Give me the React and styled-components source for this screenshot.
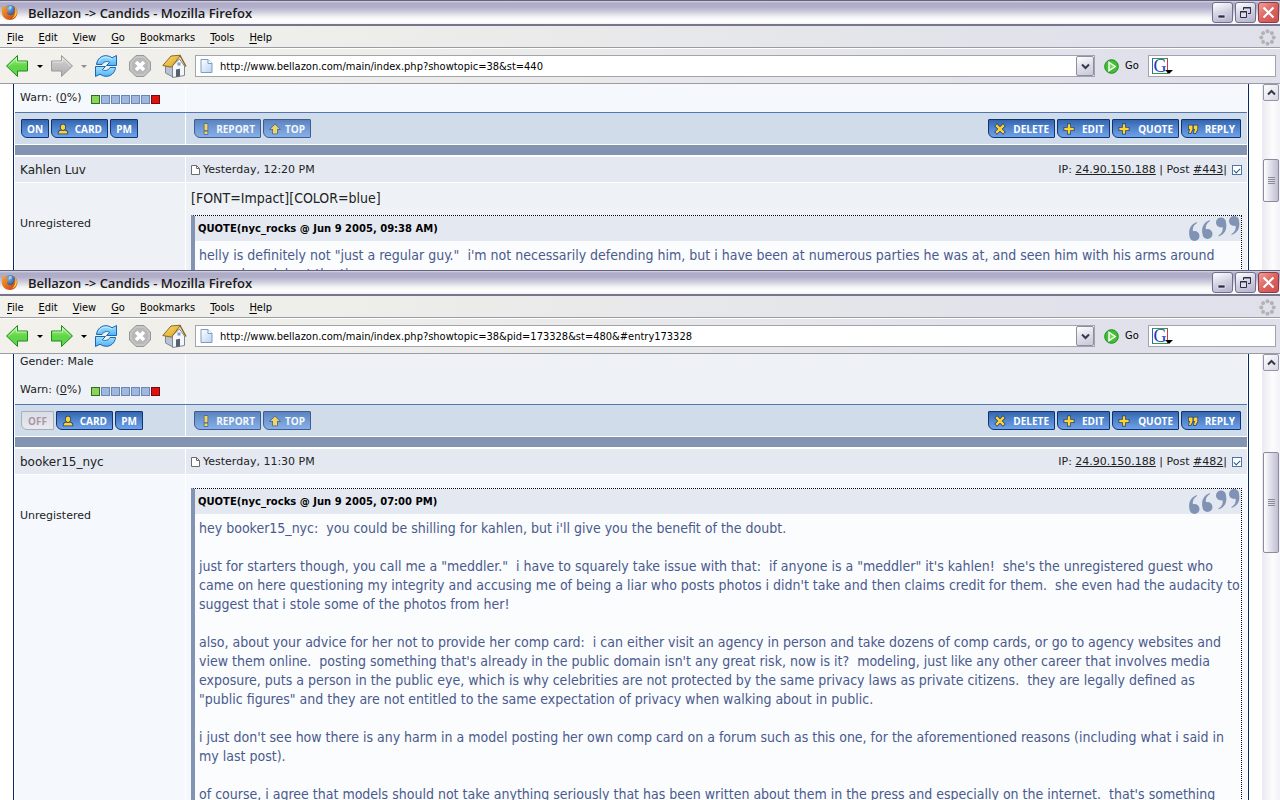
import React from 'react';
import styled, { createGlobalStyle } from 'styled-components';

const GlobalStyle = createGlobalStyle`
  * { box-sizing: border-box; }
  html, body { margin: 0; padding: 0; background: #fff; }
  body { overflow: hidden; }
  button, input { font: inherit; color: inherit; margin: 0; padding: 0; }
  a { color: inherit; }
`;

const verdana = '"DejaVu Sans", Verdana, sans-serif';
const condensed = '"DejaVu Sans Condensed", Tahoma, sans-serif';

const Desktop = styled.div`
  display: flex;
  flex-direction: column;
  height: 100vh;
  overflow: hidden;
  font-family: ${verdana};
  color: #222;
`;

const Defs = styled.svg`
  position: absolute;
  width: 0;
  height: 0;
`;

const Window = styled.section`
  display: flex;
  flex-direction: column;
  flex: ${(p) => (p.$fill ? '1 1 0' : '0 0 270px')};
  min-height: 0;
  overflow: hidden;
`;

/* ---------- window chrome ---------- */

const TitleBar = styled.header`
  display: flex;
  align-items: center;
  flex: none;
  height: 26px;
  padding: 0 1px 0 1px;
  border-top: 1px solid #67617f;
  border-bottom: 2px solid #77758c;
  background: linear-gradient(180deg, #d9d8e4 0, #aeabc6 2px, #b1aecb 6px, #cfcedd 11px, #f3f3f6 16px, #ffffff 20px, #f4f4f8 23px);
`;

const Title = styled.h1`
  flex: 1;
  margin: 0 0 0 10px;
  font: 600 13px/18px "Open Sans", "Trebuchet MS", sans-serif;
  color: #1a1a1a;
  white-space: nowrap;
`;

const WindowButtons = styled.div`
  display: flex;
  gap: 2px;
`;

const WindowButton = styled.button`
  display: grid;
  place-items: center;
  width: 21px;
  height: 21px;
  border: 1px solid ${(p) => (p.$close ? '#8a3b45' : '#6f6e8c')};
  border-radius: 3px;
  background: ${(p) =>
    p.$close
      ? 'linear-gradient(135deg, #f0a09a, #dc6460 50%, #cf504e)'
      : 'linear-gradient(160deg, #ffffff, #d2d1e2 50%, #b3b1cc)'};
`;

const chromeFill = 'linear-gradient(90deg, #f2f1ec, #eeeeea 25%, #e0e1ea 85%, #dfe0e9)';

const MenuBar = styled.nav`
  display: flex;
  align-items: center;
  gap: 15px;
  flex: none;
  height: 23px;
  padding: 1px 4px 0 7px;
  border-bottom: 1px solid #fff;
  box-shadow: inset 0 -1px 0 #9a9ba3;
  background: ${chromeFill};
  font: 11px/14px ${condensed};
  color: #000;
`;

const MenuItem = styled.button`
  border: 0;
  background: none;
  white-space: nowrap;
  u { text-underline-offset: 2px; }
`;

const Spacer = styled.div`
  flex: 1;
`;

const Toolbar = styled.div`
  display: flex;
  align-items: center;
  flex: none;
  height: 35px;
  padding: 0 4px 0 5px;
  border-bottom: 1px solid #9a9ba3;
  background: ${chromeFill};
  font: 11px/14px ${condensed};
  color: #000;
`;

const ToolButton = styled.button`
  display: grid;
  place-items: center;
  width: 24px;
  height: 24px;
  margin-right: ${(p) => p.$gap || 0}px;
  border: 0;
  background: none;
`;

const CaretButton = styled.button`
  display: grid;
  place-items: center;
  width: ${(p) => (p.$narrow ? 20 : 21)}px;
  height: 24px;
  border: 0;
  background: none;
`;

const AddressBox = styled.div`
  display: flex;
  align-items: center;
  flex: 1;
  height: 22px;
  padding-left: 4px;
  border: 1px solid #a2a3ad;
  background: #fff;
`;

const AddressInput = styled.input`
  flex: 1;
  min-width: 0;
  height: 20px;
  margin-left: 7px;
  padding-top: 1px;
  border: 0;
  outline: 0;
  background: none;
`;

const DropButton = styled.button`
  display: grid;
  place-items: center;
  width: 18px;
  height: 20px;
  border: 1px solid #8e8ea2;
  border-radius: 2px;
  background: linear-gradient(160deg, #ffffff, #dfdee9 50%, #c8c7d8);
`;

const GoButton = styled.button`
  display: flex;
  align-items: center;
  gap: 6px;
  width: 44px;
  margin-left: 9px;
  border: 0;
  background: none;
`;

const SearchBox = styled.div`
  display: flex;
  align-items: center;
  width: 128px;
  height: 22px;
  padding-left: 3px;
  border: 1px solid #a2a3ad;
  background: #fff;
`;

/* ---------- forum page ---------- */

const Content = styled.div`
  display: flex;
  flex: 1;
  min-height: 0;
  overflow: hidden;
  background: #fff;
`;

const Forum = styled.main`
  flex: 1;
  min-width: 0;
  margin: 0 13px;
  padding: 0 1px;
  border: solid #072a66;
  border-width: 0 1px;
`;

const Row = styled.div`
  display: grid;
  grid-template-columns: 170px minmax(0, 1fr);
  gap: 1px;
  margin-bottom: 1px;
`;

const PrevRow = styled(Row)`
  height: ${(p) => p.$height}px;
  margin-bottom: 0;
`;

const Cell = styled.div`
  padding: 0 5px;
  background: ${(p) => (p.$alt ? '#eef2f7' : '#f5f9fd')};
  font-size: 11px;
  line-height: 14px;
`;

const ProfileCell = styled(Cell)`
  display: flex;
  flex-direction: column;
  justify-content: flex-end;
  gap: 14px;
  padding-bottom: 7px;
`;

const WarnLine = styled.div`
  display: flex;
  align-items: center;
  gap: 10px;
`;

const WarnMeter = styled.span`
  display: flex;
  gap: 1px;
  margin-top: 2px;
`;

const warnFill = { low: '#8bd35c', mid: '#a0b8dd', high: '#dd1313' };
const warnEdge = { low: '#2f7016', mid: '#6a86b4', high: '#7a0808' };

const WarnStep = styled.i`
  width: 9px;
  height: 9px;
  border: 1px solid ${(p) => warnEdge[p.$tone]};
  background: ${(p) => warnFill[p.$tone]};
`;

const ActionRow = styled(Row)`
  border-top: 1px solid #5176b0;
`;

const ActionCell = styled.div`
  display: flex;
  align-items: center;
  gap: 2px;
  height: 31px;
  padding: 0 6px;
  padding-left: ${(p) => (p.$wide ? 8 : 6)}px;
  background: #d1dceb;
`;

const ForumButton = styled.button`
  display: flex;
  align-items: center;
  justify-content: ${(p) => (p.$bare ? 'center' : 'space-between')};
  width: ${(p) => p.$width}px;
  height: 19px;
  padding: 0 ${(p) => (p.$bare ? 0 : 5)}px;
  border: 1px solid ${(p) => (p.$off ? '#a9adba' : '#0d3573')};
  border-radius: 1px 1px 1px 6px;
  background: ${(p) =>
    p.$off
      ? 'linear-gradient(180deg, #d9dde6, #e8eaf0)'
      : 'linear-gradient(180deg, #3465ad, #4a7dc6 35%, #6ea1e8)'};
  color: ${(p) => (p.$off ? '#ad97a5' : '#fff')};
  opacity: ${(p) => (p.$soft ? 0.75 : 1)};
  font: 700 10px/14px "Open Sans", sans-serif;
`;

const Divider = styled.div`
  height: 10px;
  margin-bottom: 2px;
  background: #8394b2;
`;

const HeadCell = styled.div`
  display: flex;
  align-items: center;
  height: 25px;
  padding: 0 5px;
  background: #e4e9f1;
  font-size: ${(p) => (p.$name ? 12 : 11)}px;
  line-height: 16px;
  white-space: pre;
`;

const DateLine = styled.span`
  display: flex;
  align-items: center;
  gap: 3px;
  flex: 1;
`;

const PostInfo = styled.span`
  display: flex;
  align-items: center;
`;

const PostCheck = styled.input`
  appearance: none;
  display: grid;
  place-items: center;
  width: 10px;
  height: 10px;
  margin: 0 0 0 5px;
  border: 1px solid #4f74a8;
  background: #fff;
  &:checked::after {
    content: '';
    width: 5px;
    height: 3px;
    border: solid #345487;
    border-width: 0 0 1px 1px;
    transform: rotate(-45deg);
  }
`;

const BodyRow = styled(Row)`
  margin-bottom: 0;
`;

const AuthorCell = styled(Cell)`
  padding-top: 34px;
`;

const PostCell = styled(Cell)`
  padding-top: ${(p) => (p.$plain ? 6 : 13)}px;
  font-family: ${condensed};
  font-size: 14px;
  line-height: 19px;
`;

const PostText = styled.p`
  margin: 0 0 7px;
`;

const Quote = styled.blockquote`
  margin: 0;
  border: 1px dotted #000;
  border-left: 4px solid #8394b2;
  background: #fafcfe;
`;

const QuoteHead = styled.div`
  display: flex;
  align-items: center;
  justify-content: space-between;
  height: 25px;
  padding-left: 3px;
  background: #e4e9f1;
  font: 700 10px/14px ${verdana};
  color: #000;
`;

const QuoteBody = styled.div`
  padding: 5px 4px;
  color: #4a5a8c;
  white-space: pre;
  p { margin: 0 0 19px; }
`;

/* ---------- scroll bar ---------- */

const ScrollTrack = styled.div`
  display: flex;
  flex-direction: column;
  flex: none;
  width: 18px;
  padding: 0 1px;
  background: linear-gradient(90deg, #e9e9f0, #fdfdfe 60%, #f2f2f7);
`;

const ScrollButton = styled.button`
  display: grid;
  place-items: center;
  height: 17px;
  border: 1px solid #9695a8;
  border-radius: 2px;
  background: linear-gradient(135deg, #fff, #d6d5e2);
`;

const ScrollThumb = styled.div`
  display: grid;
  place-items: center;
  height: ${(p) => p.$size}px;
  margin-top: ${(p) => p.$offset}px;
  border: 1px solid #8c8b9e;
  border-radius: 2px;
  background: linear-gradient(90deg, #ffffff, #e4e3ed 40%, #c0bfd2);
`;

/* ---------- drawings ---------- */

const Gradients = () => (
  <Defs aria-hidden="true">
    <defs>
      <linearGradient id="green" x1="0" y1="0" x2="0" y2="1">
        <stop offset="0" stopColor="#b6f58e" />
        <stop offset=".5" stopColor="#62d648" />
        <stop offset="1" stopColor="#5fd44e" />
      </linearGradient>
      <linearGradient id="grey" x1="0" y1="0" x2="0" y2="1">
        <stop offset="0" stopColor="#d6d6d6" />
        <stop offset="1" stopColor="#adadad" />
      </linearGradient>
      <linearGradient id="blue" x1="0" y1="0" x2="0" y2="1">
        <stop offset="0" stopColor="#a6e2ff" />
        <stop offset="1" stopColor="#4fb2f5" />
      </linearGradient>
      <linearGradient id="roof" x1="0" y1="0" x2="1" y2="1">
        <stop offset="0" stopColor="#ffe27a" />
        <stop offset="1" stopColor="#d79a1d" />
      </linearGradient>
      <linearGradient id="page" x1="0" y1="0" x2="1" y2="1">
        <stop offset="0" stopColor="#ffffff" />
        <stop offset="1" stopColor="#b9d3f2" />
      </linearGradient>
      <radialGradient id="globe" cx=".4" cy=".3" r=".8">
        <stop offset="0" stopColor="#7fb6ea" />
        <stop offset="1" stopColor="#16306f" />
      </radialGradient>
      <linearGradient id="fox" x1="0" y1="0" x2="1" y2="1">
        <stop offset="0" stopColor="#f6a52c" />
        <stop offset=".6" stopColor="#e0621a" />
        <stop offset="1" stopColor="#b43a10" />
      </linearGradient>
    </defs>
  </Defs>
);

const FirefoxIcon = () => (
  <svg width="17" height="17" viewBox="0 0 17 17">
    <circle cx="9" cy="7" r="6" fill="url(#globe)" />
    <path d="M8 2.500q2-1 3 .5l-1 2-2 .5z" fill="#9fd0f2" />
    <path d="M2 2c1 0 1.500.6 2 1.200C5 2.400 6.500 2.500 7 3 5.500 3.500 5 4.500 5.500 5.500L8 6C7.500 7.500 6 7.500 6 9c.5 2 3.500 2.800 5.500 1.500 1.500-1 2-2.800 1.500-4.500.8.500 1 1.200 1.100 1.800C14.500 6 14 4 13 2.500c2.200 1.200 3.500 3.700 3.400 6C16.200 13 13 16 9 16 4.500 16 1 12.800.8 8.500.7 6 1.200 4 2 2z" fill="url(#fox)" />
    <path d="M14 3.500c2 2 2.400 5.500 1 8-1 1.600-2.600 2.700-4 3 2.500-2 4.200-5.500 3-11z" fill="#ffd23f" />
  </svg>
);

const ArrowIcon = ({ right, disabled }) => (
  <svg width="24" height="24" viewBox="0 0 24 24">
    <g transform={right ? 'translate(24 0) scale(-1 1)' : undefined}>
      <path d="M1.500 12 12.500 1.500V7H22.500V17H12.500V22.500z" fill={disabled ? 'url(#grey)' : 'url(#green)'} stroke={disabled ? '#9b9b9b' : '#1c8a1f'} strokeLinejoin="round" />
      <path d="M3.500 12 11.500 4.300V8H21.500" fill="none" stroke="#fff" strokeOpacity=".55" />
    </g>
  </svg>
);

const Caret = ({ faded }) => (
  <svg width="6" height="3" viewBox="0 0 6 3">
    <path d="M0 0h6L3 3z" fill={faded ? '#8c8c8c' : '#000'} />
  </svg>
);

const ReloadIcon = () => (
  <svg width="24" height="24" viewBox="0 0 24 24">
    <g fill="url(#blue)" stroke="#1c66b4" strokeLinejoin="round">
      <path d="M2.500 10.500C3 5 7.500 1 13 1.800c2 .2 3.700.9 5 2L22.500 1.500v10H12.500l3.200-3.200c-2.700-1.500-6-.8-7.700 2.200z" />
      <path d="M21.500 13.500c-.5 5.500-5 9.500-10.500 8.700-2-.2-3.700-.9-5-2L1.500 22.500v-10h10l-3.200 3.200c2.700 1.500 6 .8 7.700-2.200z" />
    </g>
    <path d="M4.500 8.500C6 4.500 9.500 2.700 13 3.200c2 .3 3.500 1 5 2" fill="none" stroke="#e0f6ff" strokeOpacity=".7" />
  </svg>
);

const StopIcon = () => (
  <svg width="24" height="24" viewBox="0 0 24 24">
    <path d="M8 1.500h8L22.500 8v8L16 22.500H8L1.500 16V8z" fill="#b8b8b8" stroke="#989898" />
    <path d="M8.500 3h7L21 8.500v7L15.500 21h-7L3 15.500v-7z" fill="none" stroke="#d2d2d2" />
    <path d="M8 8l8 8M16 8l-8 8" stroke="#fff" strokeWidth="3.500" />
  </svg>
);

const HomeIcon = () => (
  <svg width="25" height="25" viewBox="0 0 25 25">
    <path d="M3.500 11v8l7.500 4V12z" fill="#b9c3d4" stroke="#7c8798" />
    <path d="M10.500 11.500 17.500 5l5 7v9.500l-12 2z" fill="#f4f6fa" stroke="#7c8798" />
    <path d="M.8 11.500 9 2l9.500-.8L9.500 13.200z" fill="url(#roof)" stroke="#8c6a19" strokeLinejoin="round" />
    <path d="M18 1.500l6 11" stroke="#8c6a19" strokeWidth="1.500" />
    <path d="M14 15.500l4-.8v7.800l-4 .6z" fill="#56606e" />
    <path d="M15.500 8.500h3v3h-3z" fill="#7f9fc4" />
  </svg>
);

const PageIcon = () => (
  <svg width="13" height="16" viewBox="0 0 13 16">
    <path d="M1 1.500h7l4 4v9H1z" fill="url(#page)" stroke="#7f9cc4" />
    <path d="M8 1.500v4h4" fill="#fff" stroke="#7f9cc4" />
  </svg>
);

const Chevron = ({ up }) => (
  <svg width="9" height="7" viewBox="0 0 9 7">
    <path d={up ? 'M1 5.500 4.500 2 8 5.500' : 'M1 1.500 4.500 5 8 1.500'} fill="none" stroke="#333a4c" strokeWidth="2" />
  </svg>
);

const GoIcon = () => (
  <svg width="15" height="15" viewBox="0 0 15 15">
    <circle cx="7.500" cy="7.500" r="6.800" fill="#43bf35" stroke="#1f8b1d" />
    <path d="M5 3.300 11.200 7.500 5 11.700z" fill="#6edb54" stroke="#fff" strokeWidth="1.400" />
  </svg>
);

const GoogleMark = styled.span`
  position: relative;
  display: grid;
  place-items: center;
  width: 16px;
  height: 16px;
  border: 1px solid;
  border-color: #2d9f45 #cf3b36 #2d9f45 #2862d4;
  font: 18px/14px "Liberation Serif", serif;
  color: #1b3fb8;
  svg { position: absolute; right: -6px; bottom: -1px; }
`;

const SearchCaret = () => (
  <svg width="8" height="4" viewBox="0 0 8 4">
    <path d="M0 0h8L4 4z" />
  </svg>
);

const SpinnerIcon = () => (
  <svg width="17" height="17" viewBox="0 0 17 17" fill="#b3b3b6">
    {[0, 45, 90, 135, 180, 225, 270, 315].map((a) => (
      <circle key={a} cx="8.500" cy="2.300" r="2" transform={`rotate(${a} 8.500 8.500)`} />
    ))}
  </svg>
);

const MinimizeIcon = () => (
  <svg width="13" height="13" viewBox="0 0 13 13">
    <path d="M2 9h7v3H2z" fill="#2d2d48" stroke="#fff" strokeWidth=".6" />
  </svg>
);

const RestoreIcon = () => (
  <svg width="13" height="13" viewBox="0 0 13 13" fill="none" stroke="#2d2d48">
    <path d="M4.500 4V1.500h7v6H9" />
    <path d="M4 2h8" />
    <path d="M1.500 5.500h6v6h-6z" fill="#dddce8" />
    <path d="M1 6h7" />
  </svg>
);

const CloseIcon = () => (
  <svg width="13" height="13" viewBox="0 0 13 13">
    <path d="M1.500 1.500l10 10M11.500 1.500l-10 10" stroke="#fff" strokeWidth="2.200" />
  </svg>
);

const DocIcon = () => (
  <svg width="9" height="10" viewBox="0 0 9 10">
    <path d="M.5.500h5l3 3v6h-8z" fill="#fff" stroke="#6c6c6c" />
    <path d="M5.500.500v3h3" fill="none" stroke="#6c6c6c" />
  </svg>
);

const glyphs = {
  card: (
    <>
      <path d="M.5 9.500c0-2 1.500-3 3-3h3c1.500 0 3 1 3 3z" />
      <path d="M2.800 3.200a2.200 2.700 0 0 1 4.400 0 2.200 2.700 0 0 1-4.400 0z" />
    </>
  ),
  report: <path d="M3.500 0h3v6.300h-3zM3.500 7.500h3V10h-3z" />,
  top: <path d="M5 .5 9.500 5H7v4.500H3V5H.5z" />,
  delete: <path d="M.3 2 2 .3l3 3 3-3L9.700 2l-3 3 3 3L8 9.700l-3-3-3 3L.3 8l3-3z" />,
  plus: <path d="M3.800.3h2.400v3.500h3.500v2.400H6.200v3.500H3.800V6.200H.3V3.800h3.500z" />,
  reply: <path d="M.8 1.500h3.700V5.500L2.700 9H1L2 5H.8zM5.700 1.500h3.700V5.500L7.600 9H5.900l1-4H5.700z" />,
};

const Glyph = ({ name }) => (
  <svg width="12" height="12" viewBox="-1 -1 12 12" fill="#ffd42e" stroke="#1d3f7c" strokeWidth="1.500" paintOrder="stroke">
    {glyphs[name]}
  </svg>
);

const QuoteMark = ({ transform }) => (
  <g transform={transform}>
    <circle cx="6.500" cy="20" r="5" />
    <path d="M1.500 20C0 13 3 8 9 6v1C5.500 9 4.200 12 5 16z" />
  </g>
);

const QuoteMarks = () => (
  <svg width="53" height="26" viewBox="0 0 53 26" fill="#8093b5">
    <QuoteMark />
    <QuoteMark transform="translate(13 -2)" />
    <QuoteMark transform="translate(39.500 26.500) rotate(180)" />
    <QuoteMark transform="translate(52.500 25) rotate(180)" />
  </svg>
);

const GripIcon = () => (
  <svg width="7" height="8" viewBox="0 0 7 8" stroke="#8c8b9e">
    <path d="M0 .5h7M0 2.500h7M0 4.500h7M0 6.500h7" />
  </svg>
);

/* ---------- composition ---------- */

const menus = ['File', 'Edit', 'View', 'Go', 'Bookmarks', 'Tools', 'Help'];
const warnTones = ['low', 'mid', 'mid', 'mid', 'mid', 'mid', 'high'];

function BrowserWindow({ url, canForward, fill, thumb, children }) {
  return (
    <Window $fill={fill}>
      <TitleBar>
        <FirefoxIcon />
        <Title>Bellazon -&gt; Candids - Mozilla Firefox</Title>
        <WindowButtons>
          <WindowButton aria-label="Minimize"><MinimizeIcon /></WindowButton>
          <WindowButton aria-label="Restore"><RestoreIcon /></WindowButton>
          <WindowButton $close aria-label="Close"><CloseIcon /></WindowButton>
        </WindowButtons>
      </TitleBar>
      <MenuBar>
        {menus.map((m) => (
          <MenuItem key={m}><u>{m[0]}</u>{m.slice(1)}</MenuItem>
        ))}
        <Spacer />
        <SpinnerIcon />
      </MenuBar>
      <Toolbar>
        <ToolButton aria-label="Back"><ArrowIcon /></ToolButton>
        <CaretButton aria-label="Back history"><Caret /></CaretButton>
        <ToolButton aria-label="Forward"><ArrowIcon right disabled={!canForward} /></ToolButton>
        <CaretButton $narrow aria-label="Forward history"><Caret faded={!canForward} /></CaretButton>
        <ToolButton $gap={10} aria-label="Reload"><ReloadIcon /></ToolButton>
        <ToolButton $gap={10} aria-label="Stop"><StopIcon /></ToolButton>
        <ToolButton $gap={9} aria-label="Home"><HomeIcon /></ToolButton>
        <AddressBox>
          <PageIcon />
          <AddressInput aria-label="Address" defaultValue={url} />
          <DropButton aria-label="Show addresses"><Chevron /></DropButton>
        </AddressBox>
        <GoButton><GoIcon />Go</GoButton>
        <SearchBox>
          <GoogleMark>G<SearchCaret /></GoogleMark>
          <AddressInput aria-label="Search" />
        </SearchBox>
      </Toolbar>
      <Content>
        <Forum>{children}</Forum>
        <ScrollTrack>
          <ScrollButton aria-label="Scroll up"><Chevron up /></ScrollButton>
          <ScrollThumb $offset={thumb.offset} $size={thumb.size}><GripIcon /></ScrollThumb>
        </ScrollTrack>
      </Content>
    </Window>
  );
}

function PreviousPost({ gender, height, alt, online }) {
  return (
    <>
      <PrevRow $height={height}>
        <ProfileCell $alt={alt}>
          {gender && <div>Gender: {gender}</div>}
          <WarnLine>
            <span>Warn: (<a href="#warn">0</a>%)</span>
            <WarnMeter>
              {warnTones.map((t, i) => <WarnStep key={i} $tone={t} />)}
            </WarnMeter>
          </WarnLine>
        </ProfileCell>
        <Cell $alt={alt} />
      </PrevRow>
      <ActionRow>
        <ActionCell>
          {online
            ? <ForumButton $bare $width={28}>ON</ForumButton>
            : <ForumButton $bare $off $width={33}>OFF</ForumButton>}
          <ForumButton $width={57}><Glyph name="card" />CARD</ForumButton>
          <ForumButton $bare $width={28}>PM</ForumButton>
        </ActionCell>
        <ActionCell $wide>
          <ForumButton $soft $width={67}><Glyph name="report" />REPORT</ForumButton>
          <ForumButton $soft $width={48}><Glyph name="top" />TOP</ForumButton>
          <Spacer />
          <ForumButton $width={67}><Glyph name="delete" />DELETE</ForumButton>
          <ForumButton $width={53}><Glyph name="plus" />EDIT</ForumButton>
          <ForumButton $width={67}><Glyph name="plus" />QUOTE</ForumButton>
          <ForumButton $width={60}><Glyph name="reply" />REPLY</ForumButton>
        </ActionCell>
      </ActionRow>
      <Divider />
    </>
  );
}

function Post({ author, date, number, alt, lead, quoteTitle, paragraphs }) {
  return (
    <article>
      <Row>
        <HeadCell $name>{author}</HeadCell>
        <HeadCell>
          <DateLine><DocIcon />{date}</DateLine>
          <PostInfo>
            <span>IP: <a href="#ip">24.90.150.188</a> | Post <a href="#post">#{number}</a>|</span>
            <PostCheck type="checkbox" defaultChecked aria-label={`Select post ${number}`} />
          </PostInfo>
        </HeadCell>
      </Row>
      <BodyRow>
        <AuthorCell $alt={alt}>Unregistered</AuthorCell>
        <PostCell $alt={alt} $plain={Boolean(lead)}>
          {lead && <PostText>{lead}</PostText>}
          <Quote>
            <QuoteHead>{quoteTitle}<QuoteMarks /></QuoteHead>
            <QuoteBody>
              {paragraphs.map((t, i) => <p key={i}>{t}</p>)}
            </QuoteBody>
          </Quote>
        </PostCell>
      </BodyRow>
    </article>
  );
}

const hellyQuote = [
  `helly is definitely not "just a regular guy."  i'm not necessarily defending him, but i have been at numerous parties he was at, and seen him with his arms around
several models at the time.`,
];

const bookerQuote = [
  `hey booker15_nyc:  you could be shilling for kahlen, but i'll give you the benefit of the doubt.`,
  `just for starters though, you call me a "meddler."  i have to squarely take issue with that:  if anyone is a "meddler" it's kahlen!  she's the unregistered guest who
came on here questioning my integrity and accusing me of being a liar who posts photos i didn't take and then claims credit for them.  she even had the audacity to
suggest that i stole some of the photos from her!`,
  `also, about your advice for her not to provide her comp card:  i can either visit an agency in person and take dozens of comp cards, or go to agency websites and
view them online.  posting something that's already in the public domain isn't any great risk, now is it?  modeling, just like any other career that involves media
exposure, puts a person in the public eye, which is why celebrities are not protected by the same privacy laws as private citizens.  they are legally defined as
"public figures" and they are not entitled to the same expectation of privacy when walking about in public.`,
  `i just don't see how there is any harm in a model posting her own comp card on a forum such as this one, for the aforementioned reasons (including what i said in
my last post).`,
  `of course, i agree that models should not take anything seriously that has been written about them in the press and especially on the internet.  that's something`,
];

export default function App() {
  return (
    <Desktop>
      <GlobalStyle />
      <Gradients />
      <BrowserWindow
        url="http://www.bellazon.com/main/index.php?showtopic=38&st=440"
        thumb={{ offset: 58, size: 43 }}
      >
        <PreviousPost online height={28} />
        <Post
          alt
          author="Kahlen Luv"
          date="Yesterday, 12:20 PM"
          number={443}
          lead="[FONT=Impact][COLOR=blue]"
          quoteTitle="QUOTE(nyc_rocks @ Jun 9 2005, 09:38 AM)"
          paragraphs={hellyQuote}
        />
      </BrowserWindow>
      <BrowserWindow
        fill
        canForward
        url="http://www.bellazon.com/main/index.php?showtopic=38&pid=173328&st=480&#entry173328"
        thumb={{ offset: 81, size: 101 }}
      >
        <PreviousPost alt gender="Male" height={50} />
        <Post
          author="booker15_nyc"
          date="Yesterday, 11:30 PM"
          number={482}
          quoteTitle="QUOTE(nyc_rocks @ Jun 9 2005, 07:00 PM)"
          paragraphs={bookerQuote}
        />
      </BrowserWindow>
    </Desktop>
  );
}
